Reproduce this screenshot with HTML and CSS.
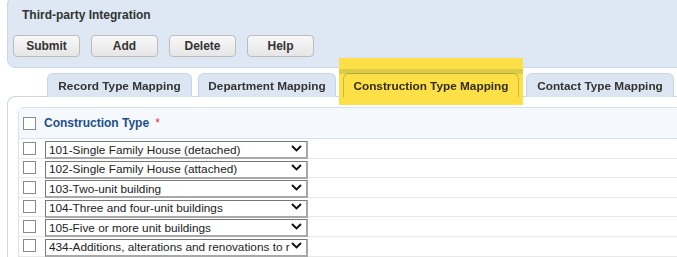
FILE: index.html
```html
<!DOCTYPE html>
<html>
<head>
<meta name="viewport" content="width=device-width, initial-scale=1">
<link rel="stylesheet" href="styles.css">
</head>
<body>
	<div class="toppanel">
		<div class="title">Third-party Integration</div>
		<div class="buttons">
			<button class="btn">Submit</button>
			<button class="btn">Add</button>
			<button class="btn">Delete</button>
			<button class="btn">Help</button>
		</div>
	</div>

	<div class="tabs">
		<div class="tab t1">Record Type Mapping</div>
		<div class="tab t2">Department Mapping</div>
		<div class="tab t3 active">Construction Type Mapping
			<span class="highlight"></span>
		</div>
		<div class="tab t4">Contact Type Mapping</div>
	</div>

	<div class="content">
		<div class="grid">
			<div class="head">
				<input type="checkbox" class="cb">
				<span class="label">Construction Type</span>
				<span class="req">*</span>
			</div>
			<div class="row">
				<input type="checkbox" class="cb">
				<div class="sel">
					<select><option>101-Single Family House (detached)</option></select>
					<svg class="chev" width="11" height="7" viewBox="0 0 11 7"><path d="M1 1 L5.5 5.5 L10 1" fill="none" stroke="#111" stroke-width="1.9"/></svg>
				</div>
			</div>
			<div class="row">
				<input type="checkbox" class="cb">
				<div class="sel">
					<select><option>102-Single Family House (attached)</option></select>
					<svg class="chev" width="11" height="7" viewBox="0 0 11 7"><path d="M1 1 L5.5 5.5 L10 1" fill="none" stroke="#111" stroke-width="1.9"/></svg>
				</div>
			</div>
			<div class="row">
				<input type="checkbox" class="cb">
				<div class="sel">
					<select><option>103-Two-unit building</option></select>
					<svg class="chev" width="11" height="7" viewBox="0 0 11 7"><path d="M1 1 L5.5 5.5 L10 1" fill="none" stroke="#111" stroke-width="1.9"/></svg>
				</div>
			</div>
			<div class="row">
				<input type="checkbox" class="cb">
				<div class="sel">
					<select><option>104-Three and four-unit buildings</option></select>
					<svg class="chev" width="11" height="7" viewBox="0 0 11 7"><path d="M1 1 L5.5 5.5 L10 1" fill="none" stroke="#111" stroke-width="1.9"/></svg>
				</div>
			</div>
			<div class="row">
				<input type="checkbox" class="cb">
				<div class="sel">
					<select><option>105-Five or more unit buildings</option></select>
					<svg class="chev" width="11" height="7" viewBox="0 0 11 7"><path d="M1 1 L5.5 5.5 L10 1" fill="none" stroke="#111" stroke-width="1.9"/></svg>
				</div>
			</div>
			<div class="row">
				<input type="checkbox" class="cb">
				<div class="sel">
					<select><option>434-Additions, alterations and renovations to residential buildings</option></select>
					<svg class="chev" width="11" height="7" viewBox="0 0 11 7"><path d="M1 1 L5.5 5.5 L10 1" fill="none" stroke="#111" stroke-width="1.9"/></svg>
				</div>
			</div>
		</div>
	</div>
</body>
</html>
```
FILE: styles.css
```css
* {
  box-sizing: border-box;
}

body {
  margin: 0;
  background: #fff;
  font-family: "Liberation Sans", Arial, sans-serif;
  color: #333;
  overflow: hidden;
}

/* top panel with title and buttons */
.toppanel {
  margin: -4px -12px 0 7px;
  height: 72px;
  padding: 11px 0 0 5px;
  background: #dde8f4;
  border: 1px solid #c8d8ea;
  border-radius: 8px;
}

.title {
  margin-left: 9px;
  font-size: 12px;
  font-weight: bold;
  line-height: 14px;
  color: #333;
}

.buttons {
  display: flex;
  gap: 11px;
  margin-top: 13px;
}

.btn {
  width: 67px;
  height: 22px;
  padding: 0;
  font-family: "Liberation Sans", Arial, sans-serif;
  font-size: 12px;
  font-weight: bold;
  color: #333;
  background: linear-gradient(#f8f8f8, #e6e6e6);
  border: 1px solid #bcbcbc;
  border-radius: 4px;
}

/* tabs */
.tabs {
  display: flex;
  gap: 6px;
  padding: 5px 0 0 47px;
  margin-bottom: -1px;
  position: relative;
  z-index: 1;
}

.tab {
  height: 24px;
  line-height: 24px;
  padding: 0;
  text-align: center;
  font-size: 11.8px;
  font-weight: bold;
  color: #333;
  background: #dce6f2;
  border: 1px solid #c6d6e9;
  border-bottom: none;
  border-radius: 6px 6px 0 0;
  white-space: nowrap;
}

.t1 { width: 145px; }
.t2 { width: 138px; }
.t3 { width: 176px; margin-left: 1px; }
.t4 { width: 148px; margin-left: 1px; }

.tab.active {
  background: #fff;
  position: relative;
}

/* yellow marker drawn over the active tab */
.highlight {
  position: absolute;
  left: -5px;
  top: -16px;
  width: 184px;
  height: 47px;
  background: linear-gradient(#fde047 0, #fde047 11px, #dccb45 11px, #dccb45 16px, #fde047 16px);
  mix-blend-mode: multiply;
}

/* content area */
.content {
  margin: 0 -12px 0 7px;
  padding: 10px 0 0 10px;
  background: #fff;
  border: 1px solid #c8d8ea;
  border-right: none;
  border-bottom: none;
  border-radius: 8px 0 0 0;
  height: 170px;
}

.grid {
  border: 1px solid #d6e2ef;
  border-right: none;
  border-bottom: none;
  border-radius: 6px 0 0 0;
}

.head {
  display: flex;
  align-items: center;
  height: 31px;
  padding-left: 4px;
  background: #f5f9fd;
  border-bottom: 1px solid #d6e2ef;
}

.label {
  margin-left: 8px;
  font-size: 12px;
  font-weight: bold;
  color: #1d4f8b;
}

.req {
  margin-left: 6px;
  font-size: 12px;
  color: #e0332f;
}

.row {
  display: flex;
  align-items: flex-start;
  height: 19.6px;
  padding: 0.5px 0 0 4px;
  border-bottom: 1px solid #e9e9e9;
}

.row .cb {
  margin-top: 2px;
}

.cb {
  appearance: none;
  -webkit-appearance: none;
  width: 13px;
  height: 13px;
  margin: 0;
  border: 1px solid #8a8a8a;
  border-radius: 0;
  background: #fff;
}

.sel {
  position: relative;
  margin-left: 9px;
  width: 263px;
  height: 18px;
}

.sel select {
  appearance: none;
  -webkit-appearance: none;
  width: 100%;
  height: 18px;
  padding: 0 16px 0 3px;
  font-family: "Liberation Sans", Arial, sans-serif;
  font-size: 11.8px;
  color: #222;
  background: #fff;
  border-style: solid;
  border-width: 1px 2px 2px 1px;
  border-color: #777 #a8a8a8 #a8a8a8 #777;
  border-radius: 0;
}

.chev {
  position: absolute;
  right: 6px;
  top: 5px;
  pointer-events: none;
}
```
